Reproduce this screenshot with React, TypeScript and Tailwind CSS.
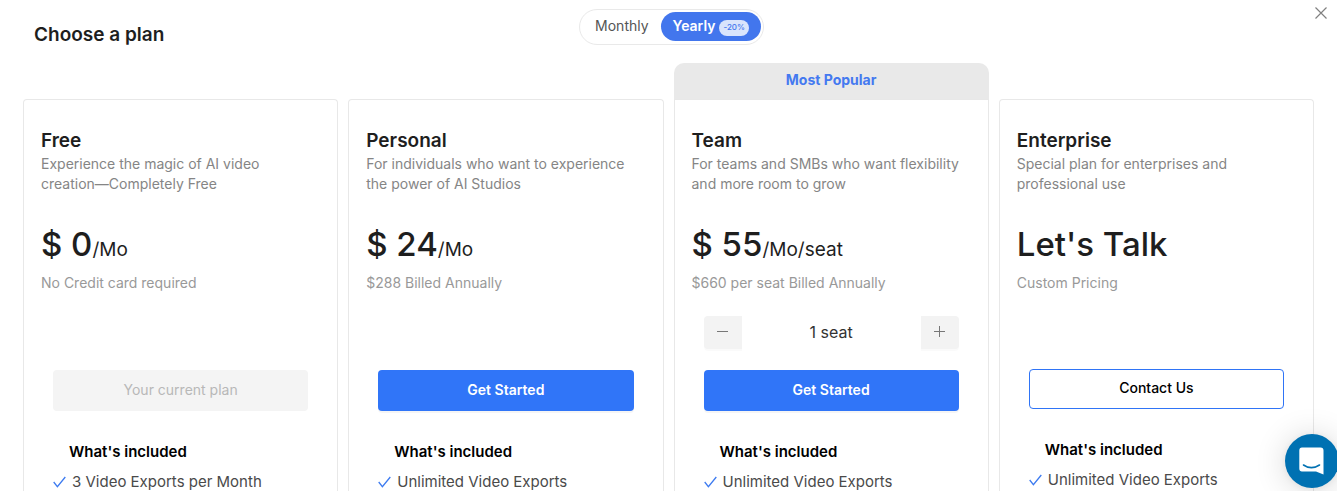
import { useState } from "react";

interface Plan {
  name: string;
  description: string[];
  price: string;
  unit?: string;
  note: string;
  action: "current" | "start" | "contact";
  hasSeats?: boolean;
  popular?: boolean;
  features: string[];
}

const PLANS: Plan[] = [
  {
    name: "Free",
    description: ["Experience the magic of AI video", "creation—Completely Free"],
    price: "$ 0",
    unit: "/Mo",
    note: "No Credit card required",
    action: "current",
    features: ["3 Video Exports per Month"],
  },
  {
    name: "Personal",
    description: ["For individuals who want to experience", "the power of AI Studios"],
    price: "$ 24",
    unit: "/Mo",
    note: "$288 Billed Annually",
    action: "start",
    features: ["Unlimited Video Exports"],
  },
  {
    name: "Team",
    description: ["For teams and SMBs who want flexibility", "and more room to grow"],
    price: "$ 55",
    unit: "/Mo/seat",
    note: "$660 per seat Billed Annually",
    action: "start",
    hasSeats: true,
    popular: true,
    features: ["Unlimited Video Exports"],
  },
  {
    name: "Enterprise",
    description: ["Special plan for enterprises and", "professional use"],
    price: "Let's Talk",
    note: "Custom Pricing",
    action: "contact",
    features: ["Unlimited Video Exports"],
  },
];

function CheckIcon() {
  return (
    <svg width="13" height="12" viewBox="0 0 13 12" fill="none" className="shrink-0" aria-hidden="true">
      <path d="M0.7 6L4.4 10.6L12.3 1" stroke="#3d7bf0" strokeWidth="1.3" />
    </svg>
  );
}

function SeatStepper() {
  const [seats, setSeats] = useState(1);

  return (
    <div className="flex h-[33px] items-stretch">
      <button
        aria-label="Remove seat"
        onClick={() => setSeats(Math.max(1, seats - 1))}
        className="flex w-[38px] items-center justify-center rounded-l bg-[#f3f3f3] pb-0.5 shadow-[0_2px_0_rgba(0,0,0,0.02)]"
      >
        <svg width="11" height="11" viewBox="0 0 11 11" aria-hidden="true">
          <path d="M0 5.5H11" stroke="#777777" />
        </svg>
      </button>
      <span className="flex flex-1 items-center justify-center pb-0.5 text-base text-[#333333]">
        {seats} {seats === 1 ? "seat" : "seats"}
      </span>
      <button
        aria-label="Add seat"
        onClick={() => setSeats(seats + 1)}
        className="flex w-[38px] items-center justify-center rounded-r bg-[#f3f3f3] pb-0.5 shadow-[0_2px_0_rgba(0,0,0,0.02)]"
      >
        <svg width="11" height="11" viewBox="0 0 11 11" aria-hidden="true">
          <path d="M0 5.5H11M5.5 0V11" stroke="#777777" />
        </svg>
      </button>
    </div>
  );
}

function PlanAction({ action }: { action: Plan["action"] }) {
  if (action === "current") {
    return (
      <button disabled className="mt-[21px] h-[41px] w-full rounded bg-[#f4f4f4] pb-0.5 text-sm text-[#b8b8b8]">
        Your current plan
      </button>
    );
  }
  if (action === "contact") {
    return (
      <button className="mt-5 h-10 w-full rounded border border-[#2f74f6] bg-white pb-0.5 text-sm font-medium text-black">
        Contact Us
      </button>
    );
  }
  return (
    <button className="mt-[21px] h-[41px] w-full rounded bg-[#3075f8] pb-0.5 text-sm font-semibold text-white shadow-[0_2px_0_rgba(0,0,0,0.04)]">
      Get Started
    </button>
  );
}

function PlanCard({ plan }: { plan: Plan }) {
  return (
    <section className="flex min-w-0 flex-col">
      {/* Most popular tab */}
      <div
        className={`h-9 shrink-0 text-center text-sm leading-[34px] font-bold text-[#4479f0] ${
          plan.popular ? "rounded-t-[10px] bg-[#e9e9e9]" : ""
        }`}
      >
        {plan.popular && "Most Popular"}
      </div>

      <div
        className={`flex-1 border border-b-0 border-[#e8e8e8] bg-white px-[17px] pt-[27px] ${
          plan.popular ? "" : "rounded-t"
        }`}
      >
        <h2 className="text-[19px] leading-[27px] font-semibold text-[#1e1e1e]">{plan.name}</h2>
        <p className="text-sm leading-5 whitespace-nowrap text-[#858585]">
          {plan.description.map((line) => (
            <span key={line} className="block">
              {line}
            </span>
          ))}
        </p>

        <p className="mt-[23px] text-[33px] leading-[54px] font-medium whitespace-nowrap text-[#1e1e1e]">
          {plan.price}
          {plan.unit && <span className="text-[19px] leading-none font-normal">{plan.unit}</span>}
        </p>
        <p className="mt-0.5 text-sm leading-5 text-[#999999]">{plan.note}</p>

        <div className="px-3 pt-[23px]">
          {plan.hasSeats ? <SeatStepper /> : <div className="h-[33px]" />}
          <PlanAction action={plan.action} />

          <h3 className="mt-[30px] pl-4 text-[15px] leading-[22px] font-semibold text-black">What's included</h3>
          <ul className="mt-2.5">
            {plan.features.map((feature) => (
              <li key={feature} className="flex items-center gap-1.5 text-[15px] leading-[18px] text-[#4a4a4a]">
                <CheckIcon />
                {feature}
              </li>
            ))}
          </ul>
        </div>
      </div>
    </section>
  );
}

export default function App() {
  const [yearly, setYearly] = useState(true);

  return (
    <div className="relative flex h-screen flex-col overflow-hidden bg-white font-['Inter',sans-serif]">
      {/* Header */}
      <header className="grid h-[63px] shrink-0 grid-cols-[1fr_auto_1fr] items-start pl-[34px] pr-7">
        <h1 className="pt-[21px] text-[19px] leading-7 font-semibold text-[#1e1e1e]">Choose a plan</h1>
        <div className="mt-[9px] flex h-9 items-start rounded-full border border-[#e9e9e9] p-0.5">
          <button
            aria-pressed={!yearly}
            onClick={() => setYearly(false)}
            className="h-[29px] pr-3 pb-0.5 pl-[13px] text-sm text-[#555555]"
          >
            Monthly
          </button>
          <button
            aria-pressed={yearly}
            onClick={() => setYearly(true)}
            className="flex h-[29px] items-center gap-1 rounded-full bg-[#4276ed] px-3 text-sm font-semibold text-white"
          >
            <span className="pb-0.5">Yearly</span>
            <span className="mt-0.5 flex h-4 items-center rounded-full bg-[#d9e4fc] px-1 text-[8px] font-medium text-[#4276ed]">
              -20%
            </span>
          </button>
        </div>
      </header>

      <button aria-label="Close" className="absolute top-[7px] right-2.5">
        <svg width="12" height="12" viewBox="0 0 12 12" aria-hidden="true">
          <path d="M0.5 0.5L11.5 11.5M11.5 0.5L0.5 11.5" stroke="#808080" strokeWidth="1.2" />
        </svg>
      </button>

      {/* Plans */}
      <main className="grid min-h-0 flex-1 grid-cols-4 gap-2.5 px-[23px]">
        {PLANS.map((plan) => (
          <PlanCard key={plan.name} plan={plan} />
        ))}
      </main>

      {/* Chat launcher */}
      <button
        aria-label="Open chat"
        className="absolute -right-0.5 bottom-[3px] flex size-[54px] items-center justify-center rounded-full bg-[#0071b2] pr-0.5 pb-px shadow-[0_1px_6px_rgba(0,0,0,0.06),0_2px_32px_rgba(0,0,0,0.16)]"
      >
        <svg width="25" height="28" viewBox="0 0 25 28" fill="none" aria-hidden="true">
          <path d="M3 0.5H21.5Q24.5 0.5 24.5 3.5V27.5L17 24.5H3Q0.3 24.5 0.3 21.5V3.5Q0.3 0.5 3 0.5Z" fill="white" />
          <path d="M4.5 18Q12.3 23.3 20.5 18" stroke="#0071b2" strokeWidth="1.6" strokeLinecap="round" />
        </svg>
      </button>
    </div>
  );
}
